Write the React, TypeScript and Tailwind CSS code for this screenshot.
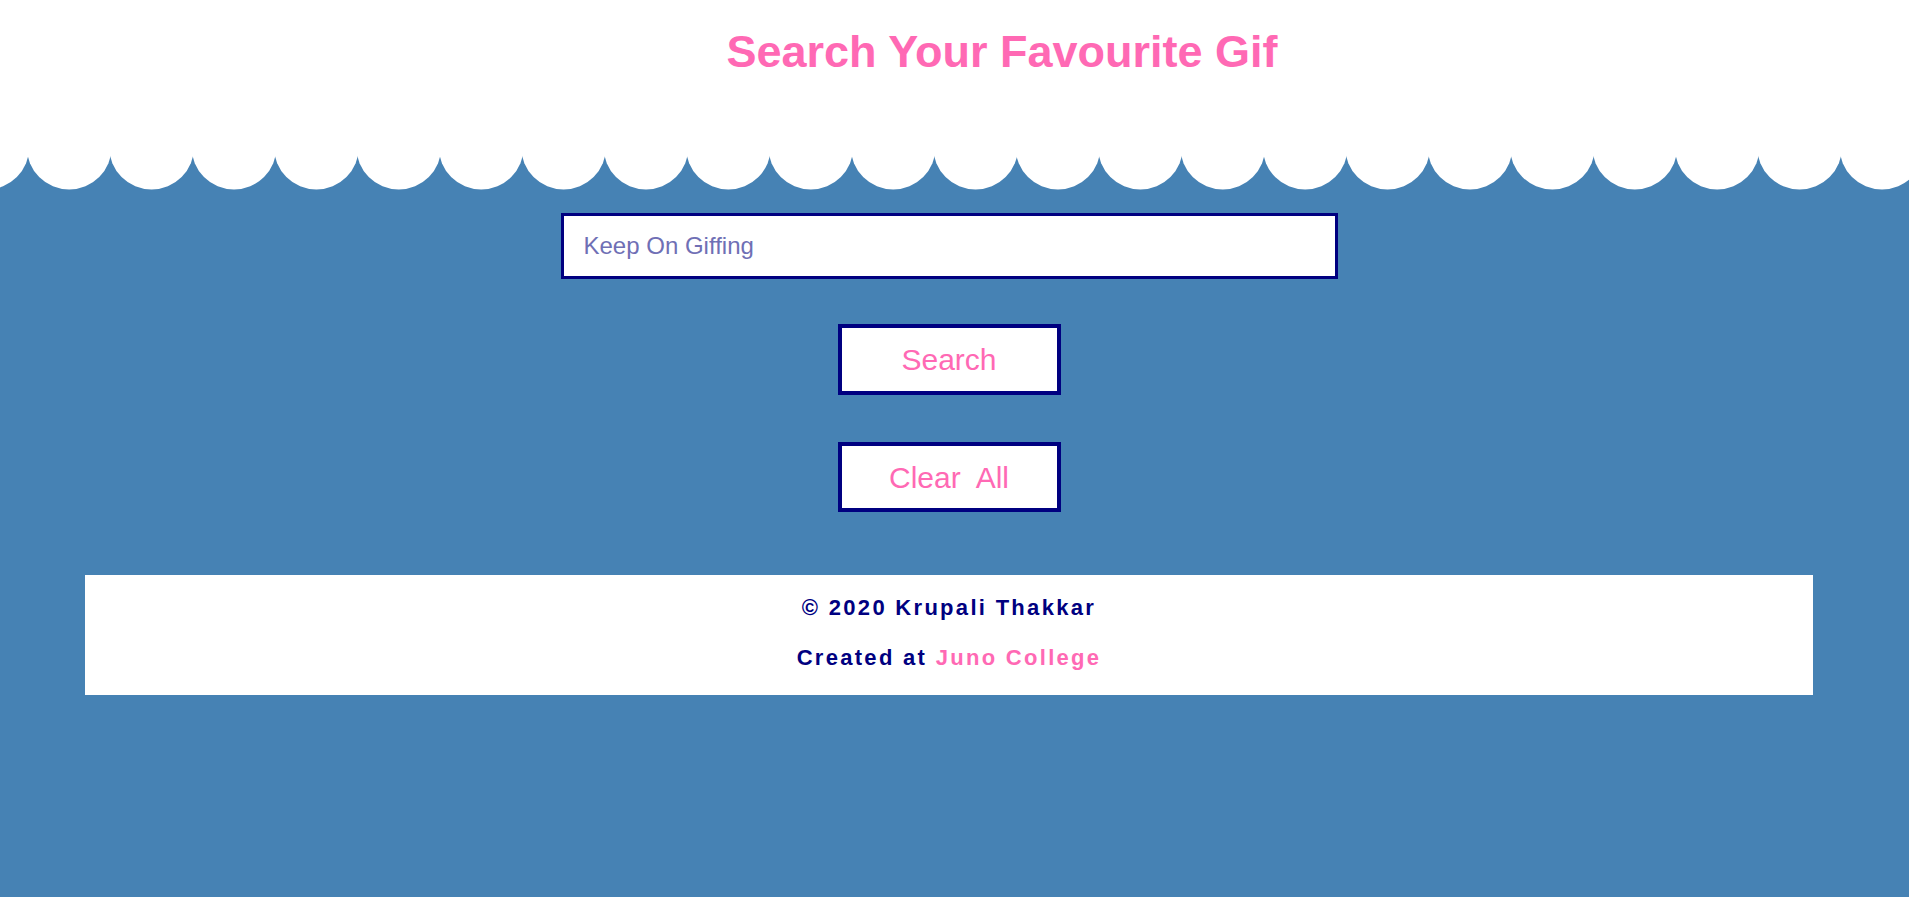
import { useState } from "react"

const circles = Array.from({ length: 25 }, (_, i) => -13.2 + i * 82.4)

export default function App() {
  const [query, setQuery] = useState<string>('')

  const clearHandler = (e: React.MouseEvent<HTMLButtonElement>) => {
    e.preventDefault()
    setQuery('')
  }

  return (
    <main className="min-h-screen bg-[#4682b4] font-['Liberation_Sans',Arial,sans-serif]">
      <header className="bg-white h-[140px] pt-[29px]">
        <h1 className="text-center pl-[95px] text-[45px] leading-[45px] font-bold text-[#ff69b4]">Search Your Favourite Gif</h1>
      </header>
      {/* scalloped edge under the header */}
      <svg className="block w-full h-[50px]" viewBox="0 0 1909 50" preserveAspectRatio="none">
        {circles.map((cx) => (
          <circle key={cx} cx={cx} cy={7} r={42.5} fill="#ffffff" />
        ))}
      </svg>
      <div className="flex flex-col items-center pr-[11px]">
        <form className="flex flex-col items-center mt-[23px]">
          <input
            value={query}
            onChange={(e) => setQuery(e.target.value)}
            className="w-[777px] h-[66px] bg-white border-[3px] border-[#000080] px-[20px] text-[24px] text-[#000080] placeholder:text-[#6f6fb5] outline-none"
            type="text"
            placeholder="Keep On Giffing"
          />
          <button type="submit" className="mt-[45px] w-[223px] h-[71px] bg-white border-4 border-[#000080] text-[30px] text-[#ff69b4]">Search</button>
          <button onClick={clearHandler} className="mt-[47px] w-[223px] h-[70px] bg-white border-4 border-[#000080] text-[30px] text-[#ff69b4]">Clear&nbsp; All</button>
        </form>
        <footer className="mt-[63px] w-[1728px] h-[120px] bg-white flex flex-col items-center pt-[20px] gap-[24px] text-[22px] leading-[26px] font-bold tracking-[2.3px] text-[#000080]">
          <p>© 2020 Krupali Thakkar</p>
          <p>Created at <span className="text-[#ff69b4]">Juno College</span></p>
        </footer>
      </div>
    </main>
  )
}
